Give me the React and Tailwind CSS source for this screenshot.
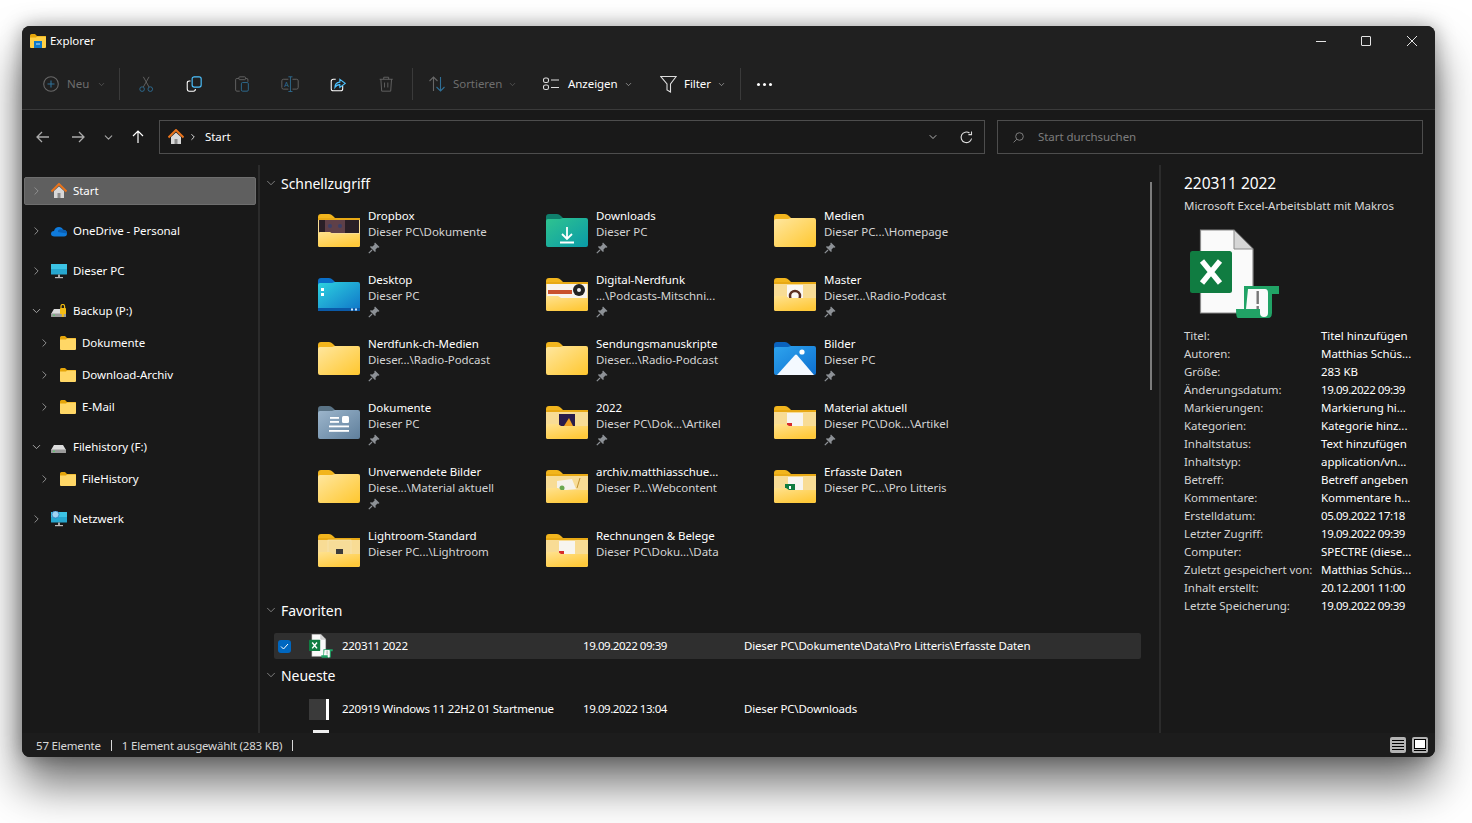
import { ChevronDown, ChevronRight } from 'lucide-react';

const QUICK = [
  [
    { name: 'Dropbox', path: 'Dieser PC\\Dokumente', pin: true, art: 'photo' },
    { name: 'Downloads', path: 'Dieser PC', pin: true, kind: 'download' },
    { name: 'Medien', path: 'Dieser PC...\\Homepage', pin: true },
  ],
  [
    { name: 'Desktop', path: 'Dieser PC', pin: true, kind: 'desktop' },
    { name: 'Digital-Nerdfunk', path: '...\\Podcasts-Mitschni...', pin: true, art: 'radio' },
    { name: 'Master', path: 'Dieser...\\Radio-Podcast', pin: true, art: 'disc' },
  ],
  [
    { name: 'Nerdfunk-ch-Medien', path: 'Dieser...\\Radio-Podcast', pin: true },
    { name: 'Sendungsmanuskripte', path: 'Dieser...\\Radio-Podcast', pin: true },
    { name: 'Bilder', path: 'Dieser PC', pin: true, kind: 'pictures' },
  ],
  [
    { name: 'Dokumente', path: 'Dieser PC', pin: true, kind: 'documents' },
    { name: '2022', path: 'Dieser PC\\Dok...\\Artikel', pin: true, art: 'dark' },
    { name: 'Material aktuell', path: 'Dieser PC\\Dok...\\Artikel', pin: true, art: 'pdf' },
  ],
  [
    { name: 'Unverwendete Bilder', path: 'Diese...\\Material aktuell', pin: true },
    { name: 'archiv.matthiasschue...', path: 'Dieser P...\\Webcontent', art: 'web' },
    { name: 'Erfasste Daten', path: 'Dieser PC...\\Pro Litteris', art: 'xls' },
  ],
  [
    { name: 'Lightroom-Standard', path: 'Dieser PC...\\Lightroom', art: 'lr' },
    { name: 'Rechnungen & Belege', path: 'Dieser PC\\Doku...\\Data', art: 'pdf' },
  ],
];

const DETAILS = [
  ['Titel:', 'Titel hinzufügen'],
  ['Autoren:', 'Matthias Schüs...'],
  ['Größe:', '283 KB'],
  ['Änderungsdatum:', '19.09.2022 09:39', true],
  ['Markierungen:', 'Markierung hi...'],
  ['Kategorien:', 'Kategorie hinz...'],
  ['Inhaltstatus:', 'Text hinzufügen'],
  ['Inhaltstyp:', 'application/vn...'],
  ['Betreff:', 'Betreff angeben'],
  ['Kommentare:', 'Kommentare h...'],
  ['Erstelldatum:', '05.09.2022 17:18', true],
  ['Letzter Zugriff:', '19.09.2022 09:39', true],
  ['Computer:', 'SPECTRE (diese...'],
  ['Zuletzt gespeichert von:', 'Matthias Schüs...'],
  ['Inhalt erstellt:', '20.12.2001 11:00', true],
  ['Letzte Speicherung:', '19.09.2022 09:39', true],
];

const PALETTES = {
  yellow: { tab: '#f2b51d', a: '#ffe7a0', b: '#ffc72e' },
  download: { tab: '#0f7f6c', a: '#2fc48f', b: '#0a9aa8' },
  desktop: { tab: '#0a6fc9', a: '#2ed3e0', b: '#0f74c8' },
  pictures: { tab: '#0a62bd', a: '#2ea4ee', b: '#0d6fd0' },
  documents: { tab: '#5a7385', a: '#9db6cc', b: '#5f7f9c' },
};

function Art({ art }) {
  if (art === 'photo')
    return (
      <g>
        <rect x="1" y="6" width="40" height="13" fill="#2a1f26" />
        <rect x="7" y="6" width="20" height="13" fill="#5f4048" />
        <circle cx="12" cy="12" r="2" fill="#3a3f68" />
        <circle cx="22" cy="12" r="2" fill="#3a3f68" />
      </g>
    );
  if (art === 'radio')
    return (
      <g>
        <rect x="1" y="6" width="40" height="15" fill="#f8f4ee" />
        <rect x="2" y="12" width="24" height="4" fill="#c9512d" />
        <circle cx="33" cy="12" r="6" fill="#222" />
        <circle cx="33" cy="12" r="2" fill="#eee" />
      </g>
    );
  if (art === 'disc')
    return (
      <g>
        <rect x="13" y="7" width="16" height="14" fill="#fbf8f4" />
        <circle cx="21" cy="18" r="5" fill="none" stroke="#5d3022" strokeWidth="2.5" />
      </g>
    );
  if (art === 'dark')
    return (
      <g>
        <rect x="13" y="8" width="16" height="14" fill="#2a1c4a" />
        <path d="M18 20 L23 12 L27 20 Z" fill="#f0a020" />
      </g>
    );
  if (art === 'pdf')
    return (
      <g>
        <rect x="13" y="7" width="16" height="14" fill="#f7f5f0" />
        <rect x="13" y="17" width="5" height="3" fill="#d62b2b" />
      </g>
    );
  if (art === 'web')
    return (
      <g>
        <path d="M11 11 L26 9 L30 19 L11 21 Z" fill="#f5f2ea" />
        <circle cx="16" cy="18" r="2.5" fill="#6aa84f" />
        <path d="M31 18 L34 8" stroke="#c09030" strokeWidth="1" />
      </g>
    );
  if (art === 'xls')
    return (
      <g>
        <rect x="14" y="7" width="15" height="14" fill="#f7f5f0" />
        <rect x="11" y="14" width="10" height="7" fill="#107c41" />
        <rect x="15" y="16" width="2" height="3" fill="#fff" />
      </g>
    );
  if (art === 'lr')
    return (
      <g>
        <rect x="10" y="6" width="23" height="16" fill="#f6dc98" stroke="#f9e7b8" strokeWidth="0.6" />
        <rect x="18" y="15" width="7" height="6" fill="#3b3b3b" />
      </g>
    );
  return null;
}

function FolderIcon({ kind = 'yellow', art }) {
  const p = PALETTES[kind];
  const id = `folder-${kind}`;
  return (
    <svg width="42" height="34" viewBox="0 0 42 34" className="shrink-0">
      <defs>
        <linearGradient id={id} x1="0" y1="0" x2="1" y2="1">
          <stop offset="0" stopColor={p.a} />
          <stop offset="1" stopColor={p.b} />
        </linearGradient>
      </defs>
      <path d="M0 3 Q0 0 3 0 H11 Q13 0 15 2 L17 4 H40 V10 H0 Z" fill={p.tab} />
      {art ? (
        <g>
          <rect x="0" y="4" width="42" height="29" rx="2" fill="#f8dc95" />
          <path d="M0 4 H15 L17 4 H42 V6 H0 Z" fill="#e8a915" />
          <Art art={art} />
          <path d="M0 20 Q0 18 2 18 H12 L15 20 H42 V31 Q42 33 40 33 H2 Q0 33 0 31 Z" fill="url(#folder-front)" />
          <defs>
            <linearGradient id="folder-front" x1="0" y1="0" x2="0.6" y2="1">
              <stop offset="0" stopColor="#ffe28f" />
              <stop offset="1" stopColor="#ffc93a" />
            </linearGradient>
          </defs>
        </g>
      ) : (
        <path d="M0 7 Q0 5 2 5 H14 L17 4 H40 Q42 4 42 6 V31 Q42 33 40 33 H2 Q0 33 0 31 Z" fill={`url(#${id})`} />
      )}
      {kind === 'download' && (
        <g stroke="#fff" strokeWidth="1.8" fill="none">
          <path d="M21 13 V24 M16 20 L21 25 L26 20" />
          <path d="M14 28.5 H28" />
        </g>
      )}
      {kind === 'desktop' && (
        <g>
          <rect x="3" y="10" width="3" height="3" fill="#fff" />
          <rect x="3" y="15" width="3" height="3" fill="#fff" />
          <rect x="0" y="30" width="42" height="3" fill="#0a5aa8" />
          <rect x="33" y="30.5" width="2" height="2" fill="#cfe8ff" />
          <rect x="37" y="30.5" width="2" height="2" fill="#cfe8ff" />
        </g>
      )}
      {kind === 'pictures' && (
        <g fill="#fff">
          <path d="M3 33 L21 13 Q22 12 23 13 L40 33 Z" fill="#f4f9ff" />
          <circle cx="28" cy="10" r="2.6" />
        </g>
      )}
      {kind === 'documents' && (
        <g fill="#fff">
          <rect x="12" y="11" width="9" height="1.8" />
          <rect x="12" y="15" width="9" height="1.8" />
          <rect x="24" y="10" width="7" height="7" rx="1.5" />
          <rect x="11" y="19.5" width="20" height="1.8" />
          <rect x="11" y="24" width="20" height="1.8" />
        </g>
      )}
    </svg>
  );
}

function SmallFolder() {
  return (
    <svg width="16" height="14" viewBox="0 0 16 14" className="shrink-0">
      <path d="M0 1.5 Q0 0 1.5 0 H5 L7 2 H16 V6 H0 Z" fill="#e5a50a" />
      <path d="M0 3.5 H6 L7 2.6 H15 Q16 2.6 16 3.6 V13 Q16 14 15 14 H1 Q0 14 0 13 Z" fill="#ffd766" />
    </svg>
  );
}

function HomeIcon({ size = 16 }) {
  return (
    <svg width={size} height={size} viewBox="0 0 16 16" className="shrink-0">
      <path d="M3 8 L8 3.5 L13 8 V15 H3 Z" fill="#d8d8d8" />
      <rect x="6.5" y="10" width="3" height="5" fill="#8b8b8b" />
      <path d="M0.5 8.5 L8 1 L15.5 8.5" fill="none" stroke="#e8731c" strokeWidth="2" />
    </svg>
  );
}

function CloudIcon() {
  return (
    <svg width="16" height="11" viewBox="0 0 16 11" className="shrink-0">
      <path d="M3.5 10.5 Q0 10.5 0 7.8 Q0 5.2 3 5 Q4 1 8 1 Q11 1 12 3.8 Q16 4 16 7.5 Q16 10.5 13 10.5 Z" fill="#0f7bdc" />
      <path d="M7 4.5 Q9 2.5 12 3.8 Q16 4 16 7.5 L7 6 Z" fill="#0a5fb4" />
    </svg>
  );
}

function MonitorIcon({ globe }) {
  return (
    <svg width="16" height="16" viewBox="0 0 16 16" className="shrink-0">
      <rect x="0" y="1" width="16" height="10.5" rx="0.6" fill="#27a7cf" />
      <rect x="0" y="1" width="16" height="5" fill="#3cc3e4" />
      <rect x="7" y="11.5" width="2" height="2.5" fill="#aaa" />
      <rect x="4" y="14" width="8" height="1.2" fill="#bbb" />
      {globe && <circle cx="4.5" cy="3.5" r="3.5" fill="#9fd4f2" stroke="#2a74b8" strokeWidth="0.7" />}
    </svg>
  );
}

function DriveIcon({ lock }) {
  return (
    <svg width="16" height="14" viewBox="0 0 16 14" className="shrink-0">
      <path d="M3 5 H12 L15 10 H0 Z" fill="#dcdcdc" />
      <rect x="0" y="9.5" width="15" height="3.5" rx="0.6" fill="#9a9a9a" />
      <rect x="2" y="10.7" width="2" height="1" fill="#4cd264" />
      {lock && (
        <g>
          <path d="M10 4 V2.5 Q10 0.5 11.8 0.5 Q13.6 0.5 13.6 2.5 V4" fill="none" stroke="#f0b90f" strokeWidth="1.2" />
          <rect x="9" y="4" width="6" height="6" rx="0.6" fill="#f4bd16" />
          <rect x="10.8" y="10" width="2" height="3" fill="#f4bd16" />
        </g>
      )}
    </svg>
  );
}

function ExcelIcon({ size = 90 }) {
  return (
    <svg width={size} height={size} viewBox="0 0 90 90" className="shrink-0">
      <path d="M10.5 1 H44 L63 20 V84 H10.5 Z" fill="#fafafa" stroke="#8a8a8a" strokeWidth="1.2" />
      <path d="M44 1 V20 H63 Z" fill="#d6d6d6" stroke="#8a8a8a" strokeWidth="1" />
      <rect x="0" y="22" width="42" height="42" rx="2.5" fill="#107c41" />
      <g stroke="#fff" strokeWidth="5.4">
        <path d="M12 32 L30 54 M30 32 L12 54" />
      </g>
      <path d="M54 57 Q55 57 72 57 Q76 57 89 57 V65 H82 V84 Q82 89 78 89 H48 Q46 89 46 80 H54 Z" fill="#21a366" />
      <path d="M58 60 H75 Q78 60 78 64 V84 Q78 88 74 88 Q70 88 70 84 V80 H56 Z" fill="#fafafa" />
      <rect x="66.5" y="62" width="2.4" height="13" fill="#777" />
      <rect x="66.5" y="77" width="2.4" height="3" fill="#777" />
    </svg>
  );
}

function PinIcon() {
  return (
    <svg width="12" height="12" viewBox="0 0 12 12" className="shrink-0">
      <path d="M7 0.5 L11.5 5 L10.5 5.7 L9.5 5.4 L7.5 7.5 L7.7 9.5 L7 10 L2 5 L2.5 4.3 L4.5 4.5 L6.6 2.5 L6.3 1.5 Z" fill="#8d9196" />
      <path d="M4 8 L0.8 11.2" stroke="#8d9196" strokeWidth="1.2" />
    </svg>
  );
}

// toolbar glyphs: white/grey outline with the blue accent part
function ToolIcon({ children, width = 20, scale = 0.82 }) {
  return (
    <svg width={width * scale} height={20 * scale} viewBox={`0 0 ${width} 20`} fill="none" strokeWidth="1.1" className="shrink-0">
      {children}
    </svg>
  );
}

function CutIcon() {
  return (
    <ToolIcon>
      <g stroke="#2f6f96">
        <circle cx="5" cy="16" r="2.8" />
        <circle cx="15" cy="16" r="2.8" />
      </g>
      <path d="M6.5 13.5 L13.5 1 M13.5 13.5 L6.5 1" stroke="#676767" />
    </ToolIcon>
  );
}

function CopyIcon() {
  return (
    <ToolIcon>
      <rect x="7.5" y="1" width="11" height="12.5" rx="2.5" stroke="#4cc2ff" strokeWidth="1.4" />
      <path d="M5.5 6 H4 Q1.5 6 1.5 8.5 V15.5 Q1.5 18.5 4 18.5 H9 Q11.5 18.5 11.5 16" stroke="#fff" strokeWidth="1.3" />
    </ToolIcon>
  );
}

function PasteIcon() {
  return (
    <ToolIcon>
      <path d="M6 3 H3.5 Q2 3 2 4.5 V17 Q2 18.5 3.5 18.5 H7 M14 3 H16 Q17 3 17 5 V7" stroke="#676767" />
      <rect x="6" y="1" width="8" height="3.5" rx="1" stroke="#676767" />
      <rect x="9" y="8" width="8.5" height="10.5" rx="1.5" stroke="#2f6f96" />
    </ToolIcon>
  );
}

function RenameIcon() {
  return (
    <ToolIcon width={22}>
      <path d="M9 4 H3 Q1 4 1 6 V14 Q1 16 3 16 H9 M14 4 H19 Q21 4 21 6 V14 Q21 16 19 16 H14" stroke="#676767" />
      <path d="M11.5 1 V19 M9 1 H14 M9 19 H14" stroke="#2f6f96" />
      <text x="4" y="13.5" fontSize="9" fill="#2f6f96" fontFamily="Noto Sans, sans-serif">A</text>
    </ToolIcon>
  );
}

function ShareIcon() {
  return (
    <ToolIcon>
      <path d="M7 4 H4 Q1.5 4 1.5 6.5 V15.5 Q1.5 18 4 18 H13 Q15.5 18 15.5 15.5 V12" stroke="#fff" strokeWidth="1.3" />
      <path d="M6 14 Q6 8 12 7.5 V4 L18.5 9 L12 14 V10.5 Q8 10.5 6 14 Z" stroke="#4cc2ff" strokeWidth="1.3" />
    </ToolIcon>
  );
}

function TrashIcon() {
  return (
    <ToolIcon>
      <path d="M2 4 H18 M7 4 V1.5 H13 V4 M3.5 4 L4.5 18.5 H15.5 L16.5 4 M8 8 V14 M12 8 V14" stroke="#676767" />
    </ToolIcon>
  );
}

function PlusIcon() {
  return (
    <ToolIcon width={16} scale={1}>
      <circle cx="8" cy="10" r="7.3" stroke="#676767" />
      <path d="M8 6.5 V13.5 M4.5 10 H11.5" stroke="#2f6f96" />
    </ToolIcon>
  );
}

function SortIcon() {
  return (
    <ToolIcon width={16} scale={1}>
      <path d="M4.5 17 V3 M0.5 7 L4.5 3 L8.5 7" stroke="#676767" />
      <path d="M11.5 3 V17 M7.5 13 L11.5 17 L15.5 13" stroke="#2f6f96" />
    </ToolIcon>
  );
}

function ViewIcon() {
  return (
    <ToolIcon width={16} scale={1}>
      <rect x="0.5" y="4" width="5" height="4.5" rx="1.8" stroke="#ddd" />
      <rect x="0.5" y="11" width="5" height="4.5" rx="1.8" stroke="#ddd" />
      <path d="M8 6 H16 M8 13.5 H16" stroke="#ddd" />
    </ToolIcon>
  );
}

function FilterIcon() {
  return (
    <ToolIcon width={17} scale={1}>
      <path d="M0.8 2.5 H16.2 L10.5 10 V18 L7 16 V10 Z" stroke="#ddd" />
    </ToolIcon>
  );
}

function ToolChevron({ dim }) {
  return <ChevronDown size={9} strokeWidth={1.5} className={dim ? 'text-[#6e6e6e]' : 'text-[#cfcfcf]'} />;
}

function Separator() {
  return <div className="w-px h-[32px] bg-[#3a3a3a] shrink-0" />;
}

function IconButton({ children }) {
  return <div className="w-[48px] h-[32px] flex items-center justify-center shrink-0">{children}</div>;
}

function Toolbar() {
  return (
    <div className="h-[50px] pt-[3px] flex items-center pl-[21px] bg-[#202020] border-b border-[#3a3a3a] box-content shrink-0">
      <div className="w-[76px] flex items-center shrink-0 text-[#6e6e6e]">
        <PlusIcon />
        <span className="ml-[8px]">Neu</span>
        <span className="ml-[8px]"><ToolChevron dim /></span>
      </div>
      <Separator />
      <div className="flex ml-[2px]">
        <IconButton><CutIcon /></IconButton>
        <IconButton><CopyIcon /></IconButton>
        <IconButton><PasteIcon /></IconButton>
        <IconButton><RenameIcon /></IconButton>
        <IconButton><ShareIcon /></IconButton>
        <IconButton><TrashIcon /></IconButton>
      </div>
      <div className="ml-[2px]"><Separator /></div>
      <div className="ml-[16px] w-[114px] flex items-center shrink-0 text-[#6e6e6e]">
        <SortIcon />
        <span className="ml-[8px]">Sortieren</span>
        <span className="ml-[6px]"><ToolChevron dim /></span>
      </div>
      <div className="w-[117px] flex items-center shrink-0 text-white">
        <ViewIcon />
        <span className="ml-[9px]">Anzeigen</span>
        <span className="ml-[6px]"><ToolChevron /></span>
      </div>
      <div className="w-[80px] flex items-center shrink-0 text-white">
        <FilterIcon />
        <span className="ml-[7px]">Filter</span>
        <span className="ml-[6px]"><ToolChevron /></span>
      </div>
      <Separator />
      <div className="ml-[16px] flex gap-[3px]">
        <span className="w-[3px] h-[3px] rounded-full bg-white" />
        <span className="w-[3px] h-[3px] rounded-full bg-white" />
        <span className="w-[3px] h-[3px] rounded-full bg-white" />
      </div>
    </div>
  );
}

function AddressBar() {
  return (
    <div className="h-[55px] flex items-start pt-[10px] pl-[4px] shrink-0">
      <div className="h-[34px] flex items-center shrink-0">
        <div className="w-[34px] flex justify-center">
          <svg width="14" height="12" viewBox="0 0 14 12" fill="none" stroke="#ababab" strokeWidth="1.3"><path d="M13 6 H1 M6 1 L1 6 L6 11" /></svg>
        </div>
        <div className="ml-[1px] w-[34px] flex justify-center">
          <svg width="14" height="12" viewBox="0 0 14 12" fill="none" stroke="#ababab" strokeWidth="1.3"><path d="M1 6 H13 M8 1 L13 6 L8 11" /></svg>
        </div>
        <div className="w-[26px] flex justify-center">
          <ChevronDown size={13} strokeWidth={2} className="text-[#a5a5a5]" />
        </div>
        <div className="w-[34px] flex justify-center">
          <svg width="12" height="14" viewBox="0 0 12 14" fill="none" stroke="#fff" strokeWidth="1.2"><path d="M6 13 V1 M1 6 L6 1 L11 6" /></svg>
        </div>
      </div>
      <div className="ml-[4px] w-[826px] h-[34px] flex items-center border border-[#4d4d4d] pl-[8px] pr-[11px] shrink-0">
        <HomeIcon />
        <ChevronRight size={10} strokeWidth={2} className="ml-[4px] text-white" />
        <span className="ml-[7px] text-white">Start</span>
        <ChevronDown size={12} strokeWidth={1.6} className="ml-auto text-[#d8d8d8]" />
        <svg width="13" height="13" viewBox="0 0 13 13" fill="none" stroke="#dcdcdc" strokeWidth="1.1" className="ml-[21px]">
          <path d="M11.6 7.5 A5.3 5.3 0 1 1 9.5 2" />
          <path d="M11.5 0.5 V3.6 H8.4" />
        </svg>
      </div>
      <div className="ml-[12px] w-[426px] h-[34px] flex items-center border border-[#4d4d4d] pl-[15px] shrink-0 text-[#7d7d7d]">
        <svg width="11" height="11" viewBox="0 0 11 11" fill="none" stroke="#7d7d7d"><circle cx="6.5" cy="4.5" r="3.8" /><path d="M3.8 7.2 L0.6 10.4" /></svg>
        <span className="ml-[14px]">Start durchsuchen</span>
      </div>
    </div>
  );
}

function NavRow({ label, icon, open, child, top, active }) {
  return (
    <div className={`h-[32px] flex items-center ${top ? 'mt-[8px]' : ''}`}>
      <div
        className={`w-[232px] h-[28px] ml-[2px] flex items-center rounded-[2px] ${active ? 'bg-[#5f5f5f] border border-[#6e6e6e]' : ''} ${child ? 'pl-[14px]' : active ? 'pl-[5px]' : 'pl-[6px]'}`}
      >
        <span className="w-[13px] flex justify-center shrink-0">
          {open ? (
            <ChevronDown size={14} strokeWidth={1.8} className="text-[#a8a8a8]" />
          ) : (
            <ChevronRight size={14} strokeWidth={1.8} className="text-[#8f8f8f]" />
          )}
        </span>
        <span className={`w-[16px] flex justify-center shrink-0 ${child ? 'ml-[9px]' : 'ml-[8px]'}`}>{icon}</span>
        <span className="ml-[6px] text-white whitespace-nowrap">{label}</span>
      </div>
    </div>
  );
}

function Sidebar() {
  return (
    <div className="w-[236px] pt-[10px] shrink-0">
      <NavRow label="Start" icon={<HomeIcon />} active />
      <NavRow label="OneDrive - Personal" icon={<CloudIcon />} top />
      <NavRow label="Dieser PC" icon={<MonitorIcon />} top />
      <NavRow label="Backup (P:)" icon={<DriveIcon lock />} open top />
      <NavRow label="Dokumente" icon={<SmallFolder />} child />
      <NavRow label="Download-Archiv" icon={<SmallFolder />} child />
      <NavRow label="E-Mail" icon={<SmallFolder />} child />
      <NavRow label="Filehistory (F:)" icon={<DriveIcon />} open top />
      <NavRow label="FileHistory" icon={<SmallFolder />} child />
      <NavRow label="Netzwerk" icon={<MonitorIcon globe />} top />
    </div>
  );
}

function SectionHeader({ title }) {
  return (
    <div className="h-[32px] flex items-center pl-[4px]">
      <ChevronDown size={14} strokeWidth={1.2} className="text-[#a8a8a8] shrink-0" />
      <span className="ml-[3px] text-[14px] text-white whitespace-nowrap">{title}</span>
    </div>
  );
}

function Tile({ item }) {
  return (
    <div className="w-[228px] h-[64px] flex shrink-0">
      <div className="pt-[6px]"><FolderIcon kind={item.kind} art={item.art} /></div>
      <div className="ml-[8px] leading-[16px] whitespace-nowrap">
        <div className="text-white">{item.name}</div>
        <div className="text-[#d4d4d4]">{item.path}</div>
        {item.pin && <div className="h-[16px] flex items-center"><PinIcon /></div>}
      </div>
    </div>
  );
}

function FileRow({ icon, name, date, path, selected }) {
  return (
    <div className={`ml-[14px] w-[867px] h-[26px] flex items-center rounded-[2px] text-white ${selected ? 'bg-[#2f2f2f]' : ''}`}>
      <span className="w-[13px] h-[13px] ml-[4px] shrink-0">
        {selected && (
          <span className="w-[13px] h-[13px] rounded-[3px] bg-[#0067c0] flex items-center justify-center">
            <svg width="9" height="7" viewBox="0 0 9 7" fill="none" stroke="#fff"><path d="M1 3.5 L3.5 6 L8 1" /></svg>
          </span>
        )}
      </span>
      <span className="w-[26px] ml-[17px] flex justify-center shrink-0">{icon}</span>
      <span className="w-[241px] ml-[8px] shrink-0 whitespace-nowrap tracking-[-0.28px]">{name}</span>
      <span className="w-[161px] shrink-0 whitespace-nowrap tracking-[-0.45px]">{date}</span>
      <span className="whitespace-nowrap tracking-[-0.17px]">{path}</span>
    </div>
  );
}

function Content() {
  return (
    <div className="w-[890px] h-full overflow-hidden shrink-0">
      <div className="pt-[2px]">
        <SectionHeader title="Schnellzugriff" />
      </div>
      <div className="pl-[58px] pt-[9px] pb-[2px]">
        {QUICK.map((row, i) => (
          <div key={i} className="flex">
            {row.map((item) => (
              <Tile key={item.name} item={item} />
            ))}
          </div>
        ))}
      </div>
      <SectionHeader title="Favoriten" />
      <div className="pt-[7px]">
        <FileRow
          selected
          icon={<ExcelIcon size={24} />}
          name="220311 2022"
          date="19.09.2022 09:39"
          path="Dieser PC\Dokumente\Data\Pro Litteris\Erfasste Daten"
        />
      </div>
      <SectionHeader title="Neueste" />
      <div className="pt-[5px]">
        <FileRow
          icon={
            <span className="w-[20px] h-[21px] mr-[4px] bg-[#3a3a3a] border-r-[3px] border-white block" />
          }
          name="220919 Windows 11 22H2 01 Startmenue"
          date="19.09.2022 13:04"
          path="Dieser PC\Downloads"
        />
      </div>
      <div className="ml-[53px] mt-[8px] w-[16px] h-[12px] bg-[#eeeeee]" />
    </div>
  );
}

function DetailsPane() {
  return (
    <div className="flex-1 border-l-2 border-[#2b2b2b] pl-[23px] pt-[8px] leading-[18px]">
      <div className="text-[15.5px] leading-[20px] text-white">220311 2022</div>
      <div className="mt-[4px] text-[#d9d9d9] whitespace-nowrap">Microsoft Excel-Arbeitsblatt mit Makros</div>
      <div className="mt-[14px] ml-[6px]"><ExcelIcon /></div>
      <div className="mt-[8px]">
        {DETAILS.map(([label, value, isDate]) => (
          <div key={label} className="flex h-[18px] whitespace-nowrap">
            <span className="w-[137px] shrink-0 text-[#d4d4d4]">{label}</span>
            <span className={`text-white ${isDate ? 'tracking-[-0.45px]' : ''}`}>{value}</span>
          </div>
        ))}
      </div>
    </div>
  );
}

function StatusBar() {
  return (
    <div className="h-[24px] flex items-center pl-[14px] pr-[7px] bg-[#1c1c1c] text-[#d8d8d8] shrink-0 tracking-[-0.2px]">
      <span className="pt-[1px]">57 Elemente</span>
      <span className="ml-[10px] w-px h-[11px] bg-[#d8d8d8]" />
      <span className="ml-[10px] pt-[1px]">1 Element ausgewählt (283 KB)</span>
      <span className="ml-[10px] w-px h-[11px] bg-[#d8d8d8]" />
      <div className="ml-auto flex gap-[6px]">
        <div className="w-[16px] h-[16px] rounded-[2px] bg-[#b4b4b4] flex flex-col justify-center gap-[2px] px-[2px]">
          <span className="h-px bg-black" />
          <span className="h-px bg-black" />
          <span className="h-px bg-black" />
          <span className="h-px bg-black" />
        </div>
        <div className="w-[16px] h-[16px] rounded-[2px] bg-[#b4b4b4] flex flex-col justify-center items-center gap-[1px]">
          <span className="w-[12px] h-[10px] bg-white border border-black" />
          <span className="w-[12px] h-px bg-black" />
        </div>
      </div>
    </div>
  );
}

export default function App() {
  return (
    <div className="w-[1472px] h-[823px] overflow-hidden bg-white pt-[26px] pl-[22px] text-[11.5px] tracking-[-0.05px] font-['Noto_Sans','Open_Sans',sans-serif]">
      <div className="w-[1413px] h-[731px] flex flex-col rounded-[8px] overflow-hidden bg-[#191919] shadow-[0_28px_45px_rgba(0,0,0,0.55),0_0_20px_rgba(0,0,0,0.35)]">
        <div className="h-[30px] flex items-center bg-[#202020] shrink-0">
          <div className="ml-[8px]">
            <svg width="16" height="14" viewBox="0 0 16 14">
              <path d="M0 1.5 Q0 0 1.5 0 H5 L7 2 H16 V6 H0 Z" fill="#e5a50a" />
              <path d="M0 3.5 H6 L7 2.6 H15 Q16 2.6 16 3.6 V13 Q16 14 15 14 H1 Q0 14 0 13 Z" fill="#ffd044" />
              <rect x="4" y="7" width="8" height="7" fill="#0f78c8" />
              <rect x="6" y="9.5" width="4" height="1" fill="#bfe3ff" />
            </svg>
          </div>
          <span className="ml-[4px] text-white">Explorer</span>
          <div className="ml-auto flex items-center">
            <span className="w-[10px] h-px bg-[#e4e4e4] mr-[35px]" />
            <span className="w-[10px] h-[10px] border border-[#e4e4e4] rounded-[1px] mr-[36px]" />
            <svg width="10" height="10" viewBox="0 0 10 10" stroke="#e4e4e4" className="mr-[18px]"><path d="M0 0 L10 10 M10 0 L0 10" /></svg>
          </div>
        </div>
        <Toolbar />
        <AddressBar />
        <div className="flex-1 min-h-0 flex">
          <Sidebar />
          <div className="w-[2px] bg-[#2b2b2b] shrink-0" />
          <Content />
          <div className="w-[9px] shrink-0 pt-[17px]">
            <div className="w-[2px] h-[208px] bg-[#7c7c7c]" />
          </div>
          <DetailsPane />
        </div>
        <StatusBar />
      </div>
    </div>
  );
}
